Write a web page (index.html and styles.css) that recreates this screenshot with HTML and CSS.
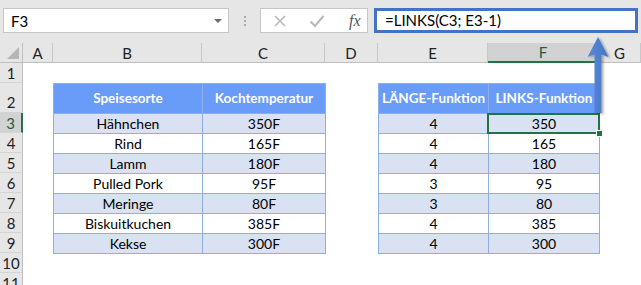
FILE: index.html
```html
<!DOCTYPE html>
<html lang="de">
<head>
    <meta charset="UTF-8">
    <title>LINKS-Funktion</title>
    <link rel="stylesheet" href="styles.css">
</head>
<body>

<div class="toolbar">
    <div class="namebox"><span>F3</span><span class="caret"></span></div>
    <div class="grip"></div>
    <div class="fx-buttons">
        <svg class="btn-icon" width="14" height="14" viewBox="0 0 14 14"><path d="M2 2 L12 12 M12 2 L2 12" stroke="#b9b9b9" stroke-width="1.6" fill="none"/></svg>
        <svg class="btn-icon" width="16" height="14" viewBox="0 0 16 14"><path d="M1.5 7.5 L6 12 L14.5 2" stroke="#b9b9b9" stroke-width="2.2" fill="none"/></svg>
        <span class="fx">fx</span>
    </div>
    <div class="formula">=LINKS(C3; E3-1)</div>
</div>

<div class="sheet">
    <div class="colheads">
        <div class="corner"></div>
        <div class="colhead">A</div>
        <div class="colhead">B</div>
        <div class="colhead">C</div>
        <div class="colhead">D</div>
        <div class="colhead">E</div>
        <div class="colhead active">F</div>
        <div class="colhead">G</div>
    </div>

    <div class="rows">
        <div class="rowheads">
            <div class="rowhead">1</div>
            <div class="rowhead tall">2</div>
            <div class="rowhead active">3</div>
            <div class="rowhead">4</div>
            <div class="rowhead">5</div>
            <div class="rowhead">6</div>
            <div class="rowhead">7</div>
            <div class="rowhead">8</div>
            <div class="rowhead">9</div>
            <div class="rowhead">10</div>
            <div class="rowhead">11</div>
        </div>

        <div class="cells">
            <table class="data food">
                <colgroup><col class="col-b"><col class="col-c"></colgroup>
                <tr class="head"><th>Speisesorte</th><th>Kochtemperatur</th></tr>
                <tr><td>Hähnchen</td><td>350F</td></tr>
                <tr><td>Rind</td><td>165F</td></tr>
                <tr><td>Lamm</td><td>180F</td></tr>
                <tr><td>Pulled Pork</td><td>95F</td></tr>
                <tr><td>Meringe</td><td>80F</td></tr>
                <tr><td>Biskuitkuchen</td><td>385F</td></tr>
                <tr><td>Kekse</td><td>300F</td></tr>
            </table>

            <table class="data result">
                <colgroup><col class="col-e"><col class="col-f"></colgroup>
                <tr class="head"><th>LÄNGE-Funktion</th><th>LINKS-Funktion</th></tr>
                <tr><td>4</td><td class="selected">350</td></tr>
                <tr><td>4</td><td>165</td></tr>
                <tr><td>4</td><td>180</td></tr>
                <tr><td>3</td><td>95</td></tr>
                <tr><td>3</td><td>80</td></tr>
                <tr><td>4</td><td>385</td></tr>
                <tr><td>4</td><td>300</td></tr>
            </table>
        </div>
    </div>
</div>

<svg class="pointer" width="30" height="84" viewBox="0 0 30 84">
    <defs>
        <filter id="shade" x="-30%" y="-10%" width="160%" height="130%">
            <feDropShadow dx="2" dy="1" stdDeviation="1.2" flood-color="#000" flood-opacity="0.3"/>
        </filter>
        <linearGradient id="arrowFill" x1="0" x2="1" y1="0" y2="0">
            <stop offset="0" stop-color="#5b8ad8"/>
            <stop offset="1" stop-color="#4473c5"/>
        </linearGradient>
    </defs>
    <polygon points="12,2 1.5,22 8.5,19.5 8.5,78 15.5,78 15.5,19.5 22.5,22" fill="url(#arrowFill)" filter="url(#shade)"/>
</svg>

</body>
</html>
```

FILE: styles.css
```css
body {
    margin: 0;
    width: 641px;
    height: 285px;
    overflow: hidden;
    position: relative;
    background: #ffffff;
    font-family: Lato, 'Liberation Sans', sans-serif;
    color: #000;
}

/* formula bar */
.toolbar {
    height: 43px;
    box-sizing: border-box;
    background: #e6e6e6;
    display: flex;
    align-items: flex-start;
    padding: 8px 0 0 3px;
}

.namebox {
    width: 226px;
    height: 25px;
    box-sizing: border-box;
    border: 1px solid #c6c6c6;
    background: #fff;
    display: flex;
    align-items: center;
    justify-content: space-between;
    padding: 0 6px 0 7px;
    font-size: 15px;
}

.caret {
    width: 0;
    height: 0;
    border-left: 4px solid transparent;
    border-right: 4px solid transparent;
    border-top: 4px solid #6b6b6b;
}

.grip {
    width: 2px;
    height: 10px;
    margin: 8px 14px 0 15px;
    background: repeating-linear-gradient(#a9a9a9 0 2px, transparent 2px 4px);
}

.fx-buttons {
    width: 108px;
    height: 25px;
    box-sizing: border-box;
    border: 1px solid #c6c6c6;
    background: #fff;
    display: flex;
    align-items: center;
    padding-left: 12px;
    gap: 22px;
}

.fx {
    font-family: 'Liberation Serif', serif;
    font-style: italic;
    font-size: 16px;
    color: #555;
    margin-left: 2px;
}

.formula {
    margin-left: 6px;
    width: 264px;
    height: 25px;
    box-sizing: border-box;
    border: 3px solid #4472c4;
    background: #fff;
    padding-left: 8px;
    font-size: 15px;
    line-height: 19px;
}

/* sheet */
.colheads {
    display: grid;
    grid-template-columns: 23px 30px 149px 123px 53px 110px 111px 42px;
    height: 20px;
    background: #e6e6e6;
}

.corner {
    position: relative;
    border-right: 1px solid #bfbfbf;
    border-bottom: 1px solid #bfbfbf;
}

.corner::after {
    content: '';
    position: absolute;
    right: 3px;
    bottom: 3px;
    border-left: 12px solid transparent;
    border-bottom: 12px solid #b6b6b6;
}

.colhead {
    border-right: 1px solid #c8c8c8;
    border-bottom: 1px solid #bfbfbf;
    display: flex;
    align-items: center;
    justify-content: center;
    font-size: 15px;
    color: #222;
}

.colhead.active {
    background: #d2d2d2;
    border-bottom: 2px solid #217346;
    color: #1e5e3a;
}

.rows {
    display: flex;
}

.rowheads {
    width: 23px;
    display: flex;
    flex-direction: column;
    background: #e6e6e6;
}

.rowhead {
    height: 20px;
    box-sizing: border-box;
    border-right: 1px solid #bfbfbf;
    border-bottom: 1px solid #d4d4d4;
    display: flex;
    align-items: center;
    justify-content: center;
    font-size: 15px;
    color: #222;
}

.rowhead.tall {
    height: 30px;
    align-items: flex-end;
    padding-bottom: 1px;
}

.rowhead.active {
    background: #d2d2d2;
    border-right: 2px solid #217346;
    color: #1e5e3a;
}

.cells {
    flex: 1;
    display: grid;
    grid-template-columns: 30px 149px 123px 53px 110px 111px 1fr;
    grid-template-rows: 20px 30px repeat(9, 20px);
}

.data {
    width: 100%;
    border-collapse: collapse;
    table-layout: fixed;
    font-size: 14px;
    grid-row: 2 / 10;
}

.food {
    grid-column: 2 / 4;
}

.result {
    grid-column: 5 / 7;
}

.col-b { width: 149px; }
.col-c { width: 123px; }
.col-e { width: 110px; }
.col-f { width: 111px; }

.data th,
.data td {
    border: 1px solid #8eaee6;
    padding: 0;
    text-align: center;
    height: 19px;
    line-height: 19px;
    white-space: nowrap;
    overflow: visible;
}

.data .head th {
    height: 29px;
    background: #699bf8;
    color: #fff;
    font-weight: bold;
    font-size: 13.5px;
    vertical-align: middle;
}

.data tr:nth-child(even) td {
    background: #d9e1f2;
}

.data td.selected {
    position: relative;
}

.data td.selected::before {
    content: '';
    position: absolute;
    top: -1px;
    left: -2px;
    right: -1px;
    bottom: -1px;
    border: 2px solid #217346;
}

.data td.selected::after {
    content: '';
    position: absolute;
    right: -4px;
    bottom: -4px;
    width: 5px;
    height: 5px;
    background: #217346;
    border: 1px solid #fff;
}

/* callout arrow over the grid */
.pointer {
    position: absolute;
    left: 586px;
    top: 35px;
}
```
